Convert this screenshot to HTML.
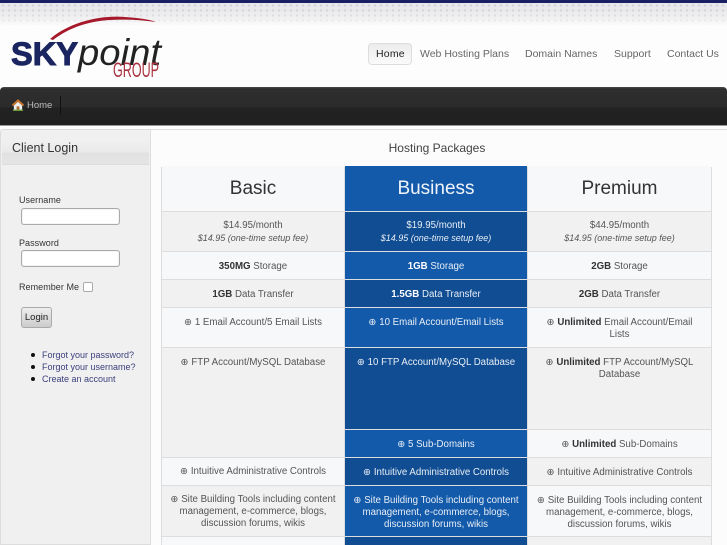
<!DOCTYPE html>
<html><head><meta charset="utf-8"><style>
*{box-sizing:border-box}
html,body{margin:0;padding:0}
body{width:727px;height:545px;overflow:hidden;position:relative;background:#fdfdfd;font-family:"Liberation Sans",sans-serif;font-size:9.7px;color:#555}
.a{position:absolute}
.c{position:absolute;text-align:center;letter-spacing:0;line-height:12px;color:#555;padding:0;white-space:nowrap}
.l{background:#f7f8fa}.g{background:#f1f1f1}
.b{background:#135aaa;color:#e8eef6}.d{background:#104d92;color:#e8eef6}
b{color:#333}.b b,.d b{color:#fff}
.c1{left:162px;width:182px}.c2{left:345px;width:182px}.c3{left:528px;width:183px}
.h{font-size:19px;line-height:45px;letter-spacing:0;color:#333}
.nav{position:absolute;top:48px;font-size:10.5px;letter-spacing:0;color:#666;line-height:13px}
i{font-size:9px}
.lb{position:absolute;left:19px;letter-spacing:.05px;color:#333;font-size:9px;line-height:12px}
.in{position:absolute;left:21px;width:99px;height:17px;background:#fff;border:1px solid #aaa;border-radius:3px;box-shadow:inset 0 0 1px #bbb}
.lk{position:absolute;left:42px;color:#3b3f7c;font-size:9px;line-height:12px}
.dot{position:absolute;left:31px;width:4px;height:4px;border-radius:50%;background:#111}
</style></head><body>
<div class="a" style="left:0;top:0;width:727px;height:3px;background:#1b2065"></div>
<div class="a" style="left:0;top:3px;width:727px;height:22px;background-image:radial-gradient(circle,#d2d3d6 1px,transparent 1.4px);background-size:6px 5px;background-color:#e9e9eb"></div>
<div class="a" style="left:0;top:3px;width:727px;height:22px;background:linear-gradient(to bottom,rgba(253,253,253,0) 30%,rgba(253,253,253,.45) 75%,rgba(253,253,253,.9) 100%)"></div>

<svg class="a" style="left:0;top:10px" width="170" height="75" viewBox="0 0 170 75">
<path d="M50 29C70 12 100 5 125 7C138 8 148 9 156 12C140 10 125 9 110 10C90 11 70 17 53 30Z" fill="#a5192b"/>
<text x="11" y="55" font-family="Liberation Sans" font-weight="bold" font-size="32" fill="#1b2560" textLength="67" lengthAdjust="spacingAndGlyphs" stroke="#1b2560" stroke-width="1">SKY</text>
<text x="78" y="55" font-family="Liberation Sans" font-style="italic" font-size="37" fill="#222" textLength="83" lengthAdjust="spacingAndGlyphs">point</text>
<text x="113" y="67" font-family="Liberation Sans" font-size="21" fill="#a8323f" textLength="46" lengthAdjust="spacingAndGlyphs">GROUP</text>
</svg>

<div class="a" style="left:368px;top:43px;width:44px;height:22px;border:1px solid #ddd;border-radius:4px;background:linear-gradient(#ececec,#fafafa)"></div>
<div class="nav" style="left:376px;color:#222;letter-spacing:.2px">Home</div>
<div class="nav" style="left:420px">Web Hosting Plans</div>
<div class="nav" style="left:525px">Domain Names</div>
<div class="nav" style="left:614px">Support</div>
<div class="nav" style="left:667px">Contact Us</div>

<div class="a" style="left:0;top:87px;width:727px;height:38px;border-radius:4px 4px 0 0;background:linear-gradient(#4a4a4a 0,#2e2e2e 2px,#2b2b2b 20px,#222 21px,#202020 100%)"></div>
<svg class="a" style="left:12px;top:99px" width="12" height="12" viewBox="0 0 13 13"><path d="M2 7V12H11V7L6.500 3Z" fill="#eee"/><path d="M0.500 7L6.500 1.500L12.500 7" fill="none" stroke="#c9752b" stroke-width="2"/><rect x="5" y="8" width="3" height="4" fill="#a86b32"/><rect x="1" y="11.500" width="11" height="1.500" fill="#6a9a3a"/></svg>
<div class="a" style="left:27px;top:100px;color:#bbb;font-size:9.5px;line-height:12px">Home</div>
<div class="a" style="left:60px;top:96px;width:1px;height:19px;background:#111"></div>

<div class="a" style="left:0;top:125px;width:727px;height:1px;background:#999"></div>
<div class="a" style="left:0;top:129px;width:151px;height:416px;background:#f0f0f0;border:1px solid #ddd;border-radius:3px 0 0 0"></div>
<div class="a" style="left:2px;top:141px;width:147px;height:24px;background:linear-gradient(#f0f0f0 0,#e9e9e9 50%,#e2e2e2 50%,#e4e4e4 100%);border-bottom:1px solid #ddd"></div>
<div class="a" style="left:12px;top:141px;font-size:12.5px;line-height:15px;color:#333">Client Login</div>
<div class="lb" style="top:194px">Username</div>
<div class="in" style="top:208px"></div>
<div class="lb" style="top:237px">Password</div>
<div class="in" style="top:250px"></div>
<div class="lb" style="top:281px">Remember Me</div>
<div class="a" style="left:83px;top:282px;width:10px;height:10px;background:#fff;border:1px solid #aaa;border-radius:2px"></div>
<div class="a" style="left:21px;top:307px;width:31px;height:21px;border:1px solid #aaa;border-radius:3px;background:linear-gradient(#eee,#ccc);text-align:center;line-height:19px;font-size:9.5px;color:#222">Login</div>
<div class="dot" style="top:353px"></div><div class="lk" style="top:349px">Forgot your password?</div>
<div class="dot" style="top:365px"></div><div class="lk" style="top:361px">Forgot your username?</div>
<div class="dot" style="top:377px"></div><div class="lk" style="top:373px">Create an account</div>

<div class="a" style="left:150px;top:129px;width:577px;height:416px;background:#fcfcfd;border:1px solid #ddd;border-right:0;border-bottom:0"></div>
<div class="a" style="left:150px;top:141px;width:574px;text-align:center;font-size:12px;line-height:14px;color:#444">Hosting Packages</div>
<div class="a" style="left:161px;top:167px;width:551px;height:378px;background:#ddd"></div>

<div class="c c1 l h" style="top:166px;height:45px">Basic</div>
<div class="c c2 b h" style="top:166px;height:45px;color:#f0f4fa">Business</div>
<div class="c c3 l h" style="top:166px;height:45px">Premium</div>

<div class="c c1 g" style="top:212px;height:39px;padding-top:8px">$14.95/month<br><i>$14.95 (one-time setup fee)</i></div>
<div class="c c2 d" style="top:212px;height:39px;padding-top:8px">$19.95/month<br><i>$14.95 (one-time setup fee)</i></div>
<div class="c c3 g" style="top:212px;height:39px;padding-top:8px">$44.95/month<br><i>$14.95 (one-time setup fee)</i></div>

<div class="c c1 l" style="top:252px;height:27px;padding-top:9px"><b>350MG</b> Storage</div>
<div class="c c2 b" style="top:252px;height:27px;padding-top:9px"><b>1GB</b> Storage</div>
<div class="c c3 l" style="top:252px;height:27px;padding-top:9px"><b>2GB</b> Storage</div>

<div class="c c1 g" style="top:280px;height:27px;padding-top:9px"><b>1GB</b> Data Transfer</div>
<div class="c c2 d" style="top:280px;height:27px;padding-top:9px"><b>1.5GB</b> Data Transfer</div>
<div class="c c3 g" style="top:280px;height:27px;padding-top:9px"><b>2GB</b> Data Transfer</div>

<div class="c c1 l" style="top:308px;height:39px;padding-top:9px">⊕ 1 Email Account/5 Email Lists</div>
<div class="c c2 b" style="top:308px;height:39px;padding-top:9px">⊕ 10 Email Account/Email Lists</div>
<div class="c c3 l" style="top:308px;height:39px;padding-top:9px">⊕ <b>Unlimited</b> Email Account/Email<br>Lists</div>

<div class="c c1 g" style="top:348px;height:109px;padding-top:9px">⊕ FTP Account/MySQL Database</div>
<div class="c c2 d" style="top:348px;height:81px;padding-top:9px">⊕ 10 FTP Account/MySQL Database</div>
<div class="c c3 g" style="top:348px;height:81px;padding-top:9px">⊕ <b>Unlimited</b> FTP Account/MySQL<br>Database</div>

<div class="c c2 b" style="top:430px;height:27px;padding-top:9px">⊕ 5 Sub-Domains</div>
<div class="c c3 l" style="top:430px;height:27px;padding-top:9px">⊕ <b>Unlimited</b> Sub-Domains</div>

<div class="c c1 l" style="top:458px;height:27px;padding-top:8px">⊕ Intuitive Administrative Controls</div>
<div class="c c2 d" style="top:458px;height:27px;padding-top:9px">⊕ Intuitive Administrative Controls</div>
<div class="c c3 g" style="top:458px;height:27px;padding-top:9px">⊕ Intuitive Administrative Controls</div>

<div class="c c1 g" style="top:486px;height:50px;padding-top:8px">⊕ Site Building Tools including content<br>management, e-commerce, blogs,<br>discussion forums, wikis</div>
<div class="c c2 b" style="top:486px;height:50px;padding-top:9px">⊕ Site Building Tools including content<br>management, e-commerce, blogs,<br>discussion forums, wikis</div>
<div class="c c3 l" style="top:486px;height:50px;padding-top:9px">⊕ Site Building Tools including content<br>management, e-commerce, blogs,<br>discussion forums, wikis</div>

<div class="c c1 l" style="top:537px;height:8px"></div>
<div class="c c2 d" style="top:537px;height:8px"></div>
<div class="c c3 g" style="top:537px;height:8px"></div>
</body></html>
